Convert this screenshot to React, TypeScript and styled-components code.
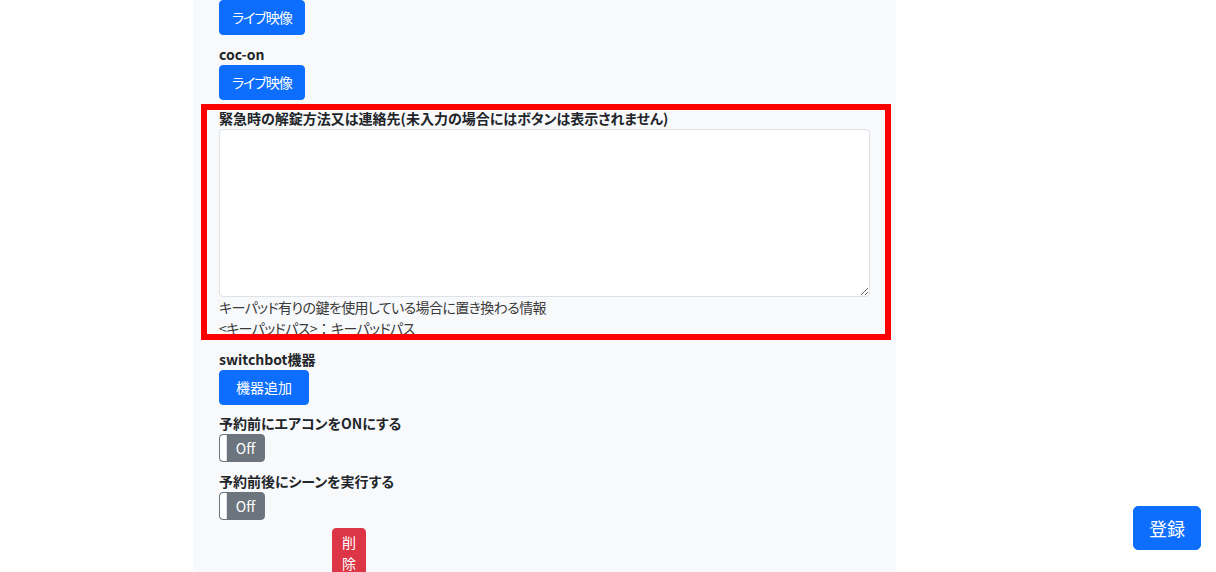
import React from "react";
import styled, { createGlobalStyle } from "styled-components";

const Global = createGlobalStyle`
  html, body {
    margin: 0;
    padding: 0;
    background: #ffffff;
    overflow: hidden;
  }
  body {
    font-family: "Noto Sans CJK JP", "Noto Sans", sans-serif;
    font-feature-settings: "palt";
    font-size: 14px;
    line-height: 1.5;
    color: #212529;
  }
  * { box-sizing: border-box; }
`;

const Panel = styled.main`
  margin-left: 193px;
  width: 703px;
  min-height: 100vh;
  padding: 0 26px;
  background: #f8f9fa;
  display: flex;
  flex-direction: column;
  align-items: stretch;
  gap: 8.5px;
`;

const Group = styled.section<{ $top?: number }>`
  position: relative;
  display: flex;
  flex-direction: column;
  align-items: flex-start;
  margin-top: ${(p) => p.$top ?? 0}px;
`;

const Label = styled.label`
  display: block;
  font-weight: 700;
  font-size: 14px;
  line-height: 21px;
  color: #212529;
`;

const Button = styled.button<{ $px?: number; $ls?: number; $variant?: "primary" | "danger" }>`
  font-family: inherit;
  font-feature-settings: "palt";
  font-size: 14px;
  line-height: 21px;
  letter-spacing: ${(p) => p.$ls ?? 0}px;
  padding: 6px ${(p) => p.$px ?? 12}px;
  border: 1px solid ${(p) => (p.$variant === "danger" ? "#dc3545" : "#0d6efd")};
  border-radius: 4px;
  background: ${(p) => (p.$variant === "danger" ? "#dc3545" : "#0d6efd")};
  color: #ffffff;
  cursor: pointer;
`;

const DeleteButton = styled(Button)`
  width: 34px;
  padding: 3px 9px 6px;
  margin-left: 113px;
  text-align: center;
  word-break: break-all;
`;

const TextArea = styled.textarea`
  display: block;
  width: 100%;
  height: 168px;
  margin: 0;
  padding: 6px 12px;
  background: #ffffff;
  border: 1px solid #dee2e6;
  border-radius: 4px;
  font-family: inherit;
  font-size: 14px;
  color: #212529;
`;

const Help = styled.div`
  font-size: 14px;
  line-height: 21px;
  letter-spacing: -0.6px;
  color: #3a3a3a;
`;

const FullWidth = styled.span`
  font-feature-settings: normal;
  letter-spacing: 0;
`;

const Highlight = styled.div`
  position: absolute;
  top: -4px;
  left: -18px;
  right: -21px;
  bottom: -1px;
  border: 6px solid #ff0000;
  pointer-events: none;
`;

const Toggle = styled.div`
  position: relative;
  width: 46px;
  height: 28px;
  border: 1px solid #6c757d;
  border-radius: 4px;
  background: #6c757d;
  color: #ffffff;
  font-size: 14px;
  line-height: 26px;
  padding-left: 7px;
  text-align: center;
  overflow: hidden;
`;

const Handle = styled.span`
  position: absolute;
  left: 0;
  top: 0;
  bottom: 0;
  width: 7px;
  background: #ffffff;
  border-right: 1px solid #dee2e6;
  border-radius: 3px 0 0 3px;
`;

const SubmitButton = styled.button`
  position: fixed;
  right: 15px;
  bottom: 22px;
  font-family: inherit;
  font-size: 18px;
  line-height: 27px;
  padding: 7.5px 15px;
  border: 1px solid #0d6efd;
  border-radius: 5px;
  background: #0d6efd;
  color: #ffffff;
`;

const OffToggle: React.FC = () => (
  <Toggle>
    <Handle />
    Off
  </Toggle>
);

export default function App() {
  return (
    <>
      <Global />
      <Panel>
        <Group>
          <Button $ls={-1}>ライブ映像</Button>
        </Group>
        <Group>
          <Label>coc-on</Label>
          <Button $ls={-1}>ライブ映像</Button>
        </Group>
        <Group>
          <Label>緊急時の解錠方法又は連絡先(未入力の場合にはボタンは表示されません)</Label>
          <TextArea />
          <Help>キーパッド有りの鍵を使用している場合に置き換わる情報</Help>
          <Help>
            &lt;キーパッドパス&gt;<FullWidth>：</FullWidth>キーパッドパス
          </Help>
          <Highlight />
        </Group>
        <Group $top={1}>
          <Label>switchbot機器</Label>
          <Button $px={16}>機器追加</Button>
        </Group>
        <Group>
          <Label>予約前にエアコンをONにする</Label>
          <OffToggle />
        </Group>
        <Group>
          <Label>予約前後にシーンを実行する</Label>
          <OffToggle />
        </Group>
        <Group>
          <DeleteButton $variant="danger">削除</DeleteButton>
        </Group>
      </Panel>
      <SubmitButton>登録</SubmitButton>
    </>
  );
}
